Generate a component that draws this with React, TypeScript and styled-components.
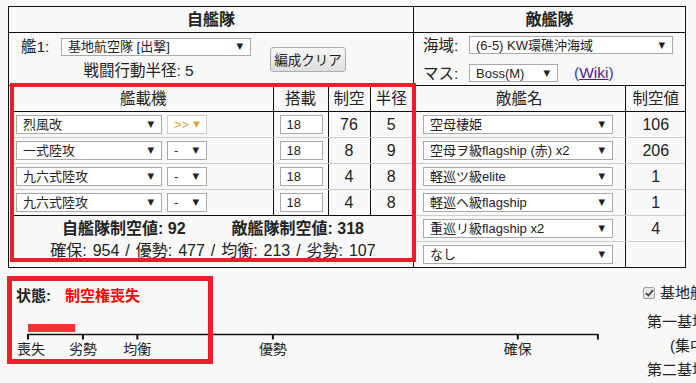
import React from 'react';
import styled, { createGlobalStyle } from 'styled-components';

const GlobalStyle = createGlobalStyle`
  html, body {
    margin: 0;
    padding: 0;
    background: #f8f8f8;
    overflow: hidden;
  }
  body {
    font-family: "Liberation Sans", "Noto Sans CJK JP", sans-serif;
    font-size: 15px;
    color: #222;
  }
`;

const Page = styled.div`
  position: relative;
  width: 696px;
  height: 383px;
  overflow: hidden;
  box-sizing: border-box;
  padding: 6px 0 0 8px;
`;

const FleetTable = styled.table`
  border-collapse: collapse;
  table-layout: fixed;
  width: 677px;
  border: 1px solid #111;
`;

const HeadCell = styled.th`
  height: 25px;
  padding: 0;
  border: 1px solid #111;
  font-size: 16px;
  font-weight: bold;
  line-height: 25px;
  text-align: center;
`;

const ControlCell = styled.td`
  height: 52px;
  padding: 0;
  border: 1px solid #111;
  vertical-align: middle;
`;

const ContentCell = styled.td`
  height: 181px;
  padding: 0;
  border: 1px solid #111;
  vertical-align: top;
`;

const ShipControls = styled.div`
  display: flex;
  align-items: center;
  padding-left: 9px;
`;

const ShipGroup = styled.div`
  display: flex;
  flex-direction: column;
  align-items: center;
  width: 233px;
  gap: 5px;
`;

const FieldRow = styled.div<{ $inset?: number }>`
  display: flex;
  align-items: center;
  align-self: stretch;
  height: 19px;
  padding-left: ${(p) => p.$inset ?? 0}px;
`;

const FieldLabel = styled.span<{ $w: number }>`
  width: ${(p) => p.$w}px;
  flex-shrink: 0;
  font-size: 15.5px;
  line-height: 19px;
`;

const Radius = styled.div`
  font-size: 15.5px;
  line-height: 20px;
  padding-left: 8px;
`;

const ClearButton = styled.button`
  margin-left: 19px;
  width: 76px;
  height: 25px;
  padding: 0;
  border: 1px solid #adadad;
  border-radius: 3px;
  background: linear-gradient(#f7f7f7, #dedede);
  font-family: inherit;
  font-size: 13.5px;
  color: #222;
`;

const EnemyControls = styled.div`
  display: flex;
  flex-direction: column;
  gap: 9px;
  padding-left: 9px;
`;

const WikiLink = styled.span`
  margin-left: 16px;
  font-size: 15.5px;
  color: #2e3f9a;
  a {
    color: #551a8b;
    text-decoration: underline;
  }
`;

const SelectBox = styled.span<{ $w: number; $h?: number; $tone?: string; $edge?: string }>`
  display: inline-flex;
  align-items: center;
  justify-content: space-between;
  box-sizing: border-box;
  width: ${(p) => p.$w}px;
  height: ${(p) => p.$h ?? 19}px;
  padding: 0 7px 0 6px;
  background: #fff;
  border: 1px solid ${(p) => p.$edge ?? '#a9a9a9'};
  font-size: 13px;
  line-height: 17px;
  color: ${(p) => p.$tone ?? '#222'};
  white-space: nowrap;
  overflow: hidden;
  vertical-align: middle;
`;

const Arrow = styled.span`
  font-family: "DejaVu Sans", sans-serif;
  font-size: 8.5px;
  margin-left: 4px;
`;

const AirTable = styled.table`
  border-collapse: collapse;
  table-layout: fixed;
  width: 398px;
  margin-left: 5px;
`;

const GridHead = styled.th<{ $edge?: boolean }>`
  height: 25px;
  padding: 0;
  border-bottom: 1px solid #111;
  border-left: ${(p) => (p.$edge ? '1px solid #111' : 'none')};
  font-size: 15.5px;
  font-weight: normal;
  line-height: 25px;
  text-align: center;
`;

const GridRow = styled.tr<{ $last?: boolean }>`
  td {
    border-bottom: 1px solid ${(p) => (p.$last ? '#111' : '#ccc')};
  }
`;

const SlotCell = styled.td`
  height: 25px;
  padding: 0 0 0 2px;
  vertical-align: middle;
`;

const SlotPickers = styled.div`
  display: flex;
  gap: 5px;
`;

const LoadCell = styled.td`
  padding: 0 0 0 6px;
  border-left: 1px solid #111;
  vertical-align: middle;
`;

const LoadInput = styled.input`
  box-sizing: border-box;
  width: 43px;
  height: 19px;
  padding: 0 0 0 6px;
  border: 1px solid #a9a9a9;
  background: #fff;
  font-family: inherit;
  font-size: 13px;
  color: #222;
  outline: none;
`;

const NumCell = styled.td`
  padding: 0;
  border-left: 1px solid #111;
  font-size: 16px;
  line-height: 25px;
  text-align: center;
  vertical-align: middle;
`;

const Summary = styled.td`
  padding: 2px 0 0;
  text-align: center;
`;

const SummaryMain = styled.div`
  display: flex;
  justify-content: center;
  gap: 46px;
  font-size: 16px;
  font-weight: bold;
  line-height: 22px;
`;

const SummaryBands = styled.div`
  font-size: 16px;
  word-spacing: 1.5px;
  line-height: 22px;
`;

const EnemyTable = styled.table`
  border-collapse: collapse;
  table-layout: fixed;
  width: 100%;
`;

const EnemyRow = styled.tr<{ $last?: boolean }>`
  td {
    border-bottom: ${(p) => (p.$last ? 'none' : '1px solid #ccc')};
  }
`;

const EnemyCell = styled.td`
  height: 25px;
  padding: 0 0 0 9px;
  vertical-align: middle;
`;

const Bottom = styled.div`
  display: flex;
  white-space: nowrap;
`;

const StatusArea = styled.div`
  width: 635px;
  flex-shrink: 0;
  padding-top: 18px;
`;

const StatusLine = styled.div`
  padding-left: 8px;
  font-size: 15px;
  font-weight: bold;
  line-height: 20px;
`;

const StatusValue = styled.span`
  margin-left: 14px;
  color: #f00;
`;

const Gauge = styled.svg`
  display: block;
  margin-top: 12px;
  font-family: "Liberation Sans", "Noto Sans CJK JP", sans-serif;
`;

const BasePanel = styled.div`
  padding-top: 14px;
  font-size: 15px;
`;

const CheckRow = styled.div`
  display: flex;
  align-items: center;
  gap: 5px;
  line-height: 22px;
  margin-bottom: 6px;
`;

const CheckMark = styled.span`
  display: inline-flex;
  align-items: center;
  justify-content: center;
  box-sizing: border-box;
  width: 12px;
  height: 12px;
  border: 1px solid #a0a0a0;
  border-radius: 2px;
  background: #e6e6e6;
`;

const BaseLine = styled.div<{ $indent?: number }>`
  padding-left: ${(p) => p.$indent ?? 4}px;
  line-height: 24px;
`;

const RedFrame = styled.div<{ $x: number; $y: number; $w: number; $h: number; $t: number }>`
  position: absolute;
  left: ${(p) => p.$x}px;
  top: ${(p) => p.$y}px;
  width: ${(p) => p.$w}px;
  height: ${(p) => p.$h}px;
  box-sizing: border-box;
  border: ${(p) => p.$t}px solid #e8202a;
  pointer-events: none;
`;

type Slot = { name: string; prof: string; load: number; air: number; radius: number };

const slots: Slot[] = [
  { name: '烈風改', prof: '>>', load: 18, air: 76, radius: 5 },
  { name: '一式陸攻', prof: '-', load: 18, air: 8, radius: 9 },
  { name: '九六式陸攻', prof: '-', load: 18, air: 4, radius: 8 },
  { name: '九六式陸攻', prof: '-', load: 18, air: 4, radius: 8 },
];

const enemies: [string, string][] = [
  ['空母棲姫', '106'],
  ['空母ヲ級flagship (赤) x2', '206'],
  ['軽巡ツ級elite', '1'],
  ['軽巡ヘ級flagship', '1'],
  ['重巡リ級flagship x2', '4'],
  ['なし', ''],
];

const Select: React.FC<{ w: number; h?: number; tone?: string; edge?: string; children: React.ReactNode }> = ({
  w,
  h,
  tone,
  edge,
  children,
}) => (
  <SelectBox $w={w} $h={h} $tone={tone} $edge={edge}>
    <span>{children}</span>
    <Arrow>▼</Arrow>
  </SelectBox>
);

const SCALE = 0.5134;
const ORIGIN = 20;
const marks = [
  { label: '喪失', value: 0, dx: 3 },
  { label: '劣勢', value: 107, dx: 0 },
  { label: '均衡', value: 213, dx: 0 },
  { label: '優勢', value: 477, dx: 0 },
  { label: '確保', value: 954, dx: 0 },
];
const AXIS_END = 1110;
const fleetAir = 92;

const App: React.FC = () => {
  const x = (v: number) => ORIGIN + v * SCALE;
  return (
    <Page>
      <GlobalStyle />
      <FleetTable>
        <colgroup>
          <col style={{ width: 405 }} />
          <col style={{ width: 272 }} />
        </colgroup>
        <thead>
          <tr>
            <HeadCell>自艦隊</HeadCell>
            <HeadCell>敵艦隊</HeadCell>
          </tr>
        </thead>
        <tbody>
          <tr>
            <ControlCell>
              <ShipControls>
                <ShipGroup>
                  <FieldRow $inset={3}>
                    <FieldLabel $w={40}>艦1:</FieldLabel>
                    <Select w={190} h={18}>基地航空隊 [出撃]</Select>
                  </FieldRow>
                  <Radius>戦闘行動半径: 5</Radius>
                </ShipGroup>
                <ClearButton>編成クリア</ClearButton>
              </ShipControls>
            </ControlCell>
            <ControlCell>
              <EnemyControls>
                <FieldRow>
                  <FieldLabel $w={46}>海域:</FieldLabel>
                  <Select w={204} h={18}>(6-5) KW環礁沖海域</Select>
                </FieldRow>
                <FieldRow>
                  <FieldLabel $w={46}>マス:</FieldLabel>
                  <Select w={89} h={18}>Boss(M)</Select>
                  <WikiLink>
                    (<a>Wiki</a>)
                  </WikiLink>
                </FieldRow>
              </EnemyControls>
            </ControlCell>
          </tr>
          <tr>
            <ContentCell>
              <AirTable>
                <colgroup>
                  <col style={{ width: 259 }} />
                  <col style={{ width: 55 }} />
                  <col style={{ width: 42 }} />
                  <col style={{ width: 42 }} />
                </colgroup>
                <thead>
                  <tr>
                    <GridHead>艦載機</GridHead>
                    <GridHead $edge>搭載</GridHead>
                    <GridHead $edge>制空</GridHead>
                    <GridHead $edge>半径</GridHead>
                  </tr>
                </thead>
                <tbody>
                  {slots.map((s, i) => (
                    <GridRow key={i} $last={i === slots.length - 1}>
                      <SlotCell>
                        <SlotPickers>
                          <Select w={146}>{s.name}</Select>
                          {s.prof === '>>' ? (
                            <Select w={40} tone="#e3a23a" edge="#cfcfcf">
                              &gt;&gt;
                            </Select>
                          ) : (
                            <Select w={40}>{s.prof}</Select>
                          )}
                        </SlotPickers>
                      </SlotCell>
                      <LoadCell>
                        <LoadInput defaultValue={s.load} />
                      </LoadCell>
                      <NumCell>{s.air}</NumCell>
                      <NumCell>{s.radius}</NumCell>
                    </GridRow>
                  ))}
                  <tr>
                    <Summary colSpan={4}>
                      <SummaryMain>
                        <span>自艦隊制空値: 92</span>
                        <span>敵艦隊制空値: 318</span>
                      </SummaryMain>
                      <SummaryBands>確保: 954 / 優勢: 477 / 均衡: 213 / 劣勢: 107</SummaryBands>
                    </Summary>
                  </tr>
                </tbody>
              </AirTable>
            </ContentCell>
            <ContentCell>
              <EnemyTable>
                <colgroup>
                  <col style={{ width: 211 }} />
                  <col style={{ width: 61 }} />
                </colgroup>
                <thead>
                  <tr>
                    <GridHead>敵艦名</GridHead>
                    <GridHead $edge>制空値</GridHead>
                  </tr>
                </thead>
                <tbody>
                  {enemies.map(([name, air], i) => (
                    <EnemyRow key={i} $last={i === enemies.length - 1}>
                      <EnemyCell>
                        <Select w={190}>{name}</Select>
                      </EnemyCell>
                      <NumCell>{air}</NumCell>
                    </EnemyRow>
                  ))}
                </tbody>
              </EnemyTable>
            </ContentCell>
          </tr>
        </tbody>
      </FleetTable>

      <Bottom>
        <StatusArea>
          <StatusLine>
            状態:<StatusValue>制空権喪失</StatusValue>
          </StatusLine>
          <Gauge width={620} height={44} viewBox="0 0 620 44">
            <rect x={ORIGIN} y={6} width={fleetAir * SCALE} height={8} fill="#ee3333" />
            <line x1={ORIGIN} y1={16.5} x2={x(AXIS_END)} y2={16.5} stroke="#111" strokeWidth={1.3} />
            {[...marks.map((m) => m.value), AXIS_END].map((v) => (
              <line key={v} x1={x(v)} y1={16} x2={x(v)} y2={21.5} stroke="#111" strokeWidth={2} />
            ))}
            {marks.map((m) => (
              <text key={m.label} x={x(m.value) + m.dx} y={36} fontSize={14} fill="#222" textAnchor="middle">
                {m.label}
              </text>
            ))}
          </Gauge>
        </StatusArea>
        <BasePanel>
          <CheckRow>
            <CheckMark>
              <svg width="9" height="8" viewBox="0 0 9 8">
                <path d="M1 4.2 L3.4 6.5 L8 1.2" fill="none" stroke="#444" strokeWidth="1.8" />
              </svg>
            </CheckMark>
            基地航空隊
          </CheckRow>
          <BaseLine>第一基地航空隊</BaseLine>
          <BaseLine $indent={27}>(集中)</BaseLine>
          <BaseLine>第二基地航空隊</BaseLine>
        </BasePanel>
      </Bottom>

      <RedFrame $x={10} $y={83} $w={406} $h={179} $t={4} />
      <RedFrame $x={7} $y={276} $w={206} $h={88} $t={5} />
    </Page>
  );
};

export default App;
